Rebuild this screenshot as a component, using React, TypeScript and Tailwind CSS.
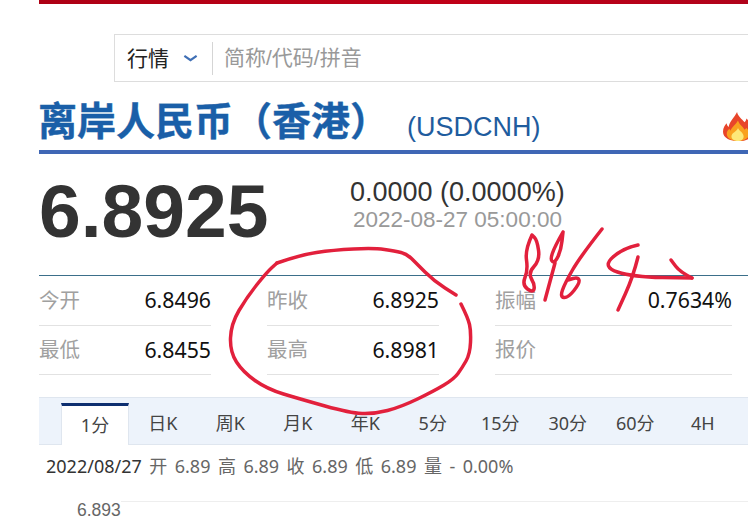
const cjk = "font-['Liberation_Sans','Noto_Sans_CJK_SC',sans-serif]";
const ui = "font-['Noto_Sans','Noto_Sans_CJK_SC',sans-serif]";

const stats = [
  [
    { label: "今开", value: "6.8496" },
    { label: "最低", value: "6.8455" },
  ],
  [
    { label: "昨收", value: "6.8925" },
    { label: "最高", value: "6.8981" },
  ],
  [
    { label: "振幅", value: "0.7634%" },
    { label: "报价", value: "" },
  ],
];

const tabs = ["日K", "周K", "月K", "年K", "5分", "15分", "30分", "60分", "4H"];

// the red pen strokes on top of the screenshot
const strokes: number[][][] = [
  [[277, 263], [300, 255], [333, 250], [374, 248], [395, 251], [407, 254], [416, 263], [434, 281], [456, 295]],
  [[461, 304], [468, 318], [471, 331], [470, 354], [462, 368], [454, 379], [434, 391], [401, 407], [374, 414], [350, 413], [300, 399], [267, 389], [243, 372], [230, 352], [231, 324], [247, 297], [267, 272], [277, 263]],
  [[532, 235], [525, 250], [528, 270], [522, 285], [533, 293], [535, 285], [528, 273], [540, 260], [537, 240], [532, 235]],
  [[563, 232], [555, 246], [550, 260], [555, 263], [561, 250], [563, 232]],
  [[555, 263], [545, 300]],
  [[602, 229], [580, 257], [565, 283], [560, 297], [568, 298], [580, 283], [578, 277], [568, 280]],
  [[638, 245], [623, 248], [602, 267], [633, 277], [692, 278]],
  [[692, 278], [680, 272], [671, 260]],
  [[638, 257], [633, 277], [618, 310]],
];

function smooth(pts: number[][]) {
  let d = `M${pts[0][0]} ${pts[0][1]}`;
  for (let i = 1; i < pts.length - 1; i++) {
    const mx = (pts[i][0] + pts[i + 1][0]) / 2;
    const my = (pts[i][1] + pts[i + 1][1]) / 2;
    d += ` Q${pts[i][0]} ${pts[i][1]} ${mx} ${my}`;
  }
  const last = pts[pts.length - 1];
  return `${d} L${last[0]} ${last[1]}`;
}

function Flame() {
  return (
    <svg viewBox="0 0 34 32" className="w-[34px] h-[30px] shrink-0 -mr-[7px] mb-[3px]">
      <path d="M16 0c1 5 5 7 8 11 1-1 2-3 2-4 4 4 7 9 7 14 0 6-6 10-15 10S1 28 1 21c0-4 2-7 4-9 0 2 1 3 2 4 1-6 6-10 9-16z" fill="#e8452a" />
      <path d="M17 9c1 4 5 6 7 10l2-2c2 2 3 4 3 6 0 5-5 8-12 8S5 28 5 23c0-2 1-4 3-5l1 2c1-4 6-7 8-11z" fill="#f9a11f" />
      <path d="M17 17c1 3 6 5 6 9 0 3-3 5-6 5s-7-2-7-5c0-4 6-5 7-9z" fill="#fde878" />
    </svg>
  );
}

function Annotation() {
  return (
    <svg
      viewBox="0 0 748 528"
      className="absolute inset-0 w-[748px] h-[528px] pointer-events-none"
      fill="none"
      stroke="#e2203c"
      strokeWidth="3.5"
      strokeLinecap="round"
      strokeLinejoin="round"
    >
      {strokes.map((s, i) => (
        <path key={i} d={smooth(s)} />
      ))}
    </svg>
  );
}

export default function App() {
  return (
    <div className={`relative w-[748px] h-[528px] overflow-hidden bg-white ${cjk}`}>
      <div className="ml-[39px] h-[4px] bg-[linear-gradient(90deg,#ad0014,#c00018_60%,#b0021a)]" />

      <div className="ml-[39px] w-[709px]">
        <div className="ml-[75px] mt-[30px] w-[700px] h-[48px] border border-[#dddddd] flex items-center">
          <span className="ml-[12px] mt-[1px] text-[21px] text-[#222222] leading-none">行情</span>
          <svg viewBox="0 0 16 8" className="ml-[14px] w-[15px] h-[7px]" fill="none" stroke="#3f6fb5" strokeWidth="2.5">
            <path d="M1 1l7 5 7-5" />
          </svg>
          <div className="ml-[14px] w-px h-[33px] bg-[#d5d5d5]" />
          <span className="ml-[11px] -mt-[1px] text-[21px] text-[#999999] leading-none">简称/代码/拼音</span>
        </div>

        <div className="mt-[19px] h-[53px] flex items-end border-b-[4px] border-[#3f67b5] pb-[5px]">
          <h1 className="text-[39px] leading-[46px] font-bold text-[#1a5fa8] whitespace-nowrap -ml-[1px] [-webkit-text-stroke:0.4px_#1a5fa8]">离岸人民币（香港）</h1>
          <span className="ml-[18px] mb-[3px] text-[27px] leading-[30px] text-[#1f5c9e]">(USDCNH)</span>
          <div className="ml-auto">
            <Flame />
          </div>
        </div>

        <div className="mt-[19px] h-[103px] flex border-b border-[#3b6f8a]">
          <div className="w-[311px] text-[75px] leading-[76px] font-bold text-[#333333]">6.8925</div>
          <div className="mt-[5px] whitespace-nowrap">
            <div className="text-[27px] leading-[28px] text-[#333333]">0.0000 (0.0000%)</div>
            <div className="mt-[1px] text-[22.5px] leading-[26px] text-[#999999] ml-[3px]">2022-08-27 05:00:00</div>
          </div>
        </div>

        <div className="flex gap-[56px]">
          {stats.map((col, i) => (
            <div key={i} className={i === 2 ? "w-[237px]" : "w-[172px]"}>
              {col.map((s) => (
                <div key={s.label} className="h-[49.5px] flex items-center justify-between border-b border-[#e2e2e2]">
                  <span className={`text-[20.5px] text-[#a0a0a0] ${ui}`}>{s.label}</span>
                  <span className={`text-[21.3px] text-[#111111] ${ui}`}>{s.value}</span>
                </div>
              ))}
            </div>
          ))}
        </div>

        <div className={`mt-[22px] h-[48px] bg-[#edf3fb] border-y border-[#dfe6ef] flex items-end pl-[22px] text-[18px] text-[#444444] ${ui}`}>
          <div className="w-[68px] h-[42px] bg-white border-t-[3px] border-[#0e2f70] border-x border-x-[#dfe6ef] -mb-px flex items-center justify-center">
            1分
          </div>
          {tabs.map((t) => (
            <div key={t} className="w-[67.5px] h-[42px] flex items-center justify-center">
              {t}
            </div>
          ))}
        </div>

        <div className={`mt-[10px] ml-[7px] text-[18px] leading-[22px] text-[#666666] whitespace-pre [word-spacing:2.8px] ${ui}`}>
          <span className="text-[#333333]">2022/08/27</span> 开 6.89 高 6.89 收 6.89 低 6.89 量 - 0.00%
        </div>

        <div className="mt-[24px] flex">
          <span className="ml-[38px] text-[17.5px] leading-[18px] text-[#666666] font-['Liberation_Sans']">6.893</span>
          <div className="flex-1 h-px bg-[#eeeeee]" />
        </div>
      </div>

      <Annotation />
    </div>
  );
}
